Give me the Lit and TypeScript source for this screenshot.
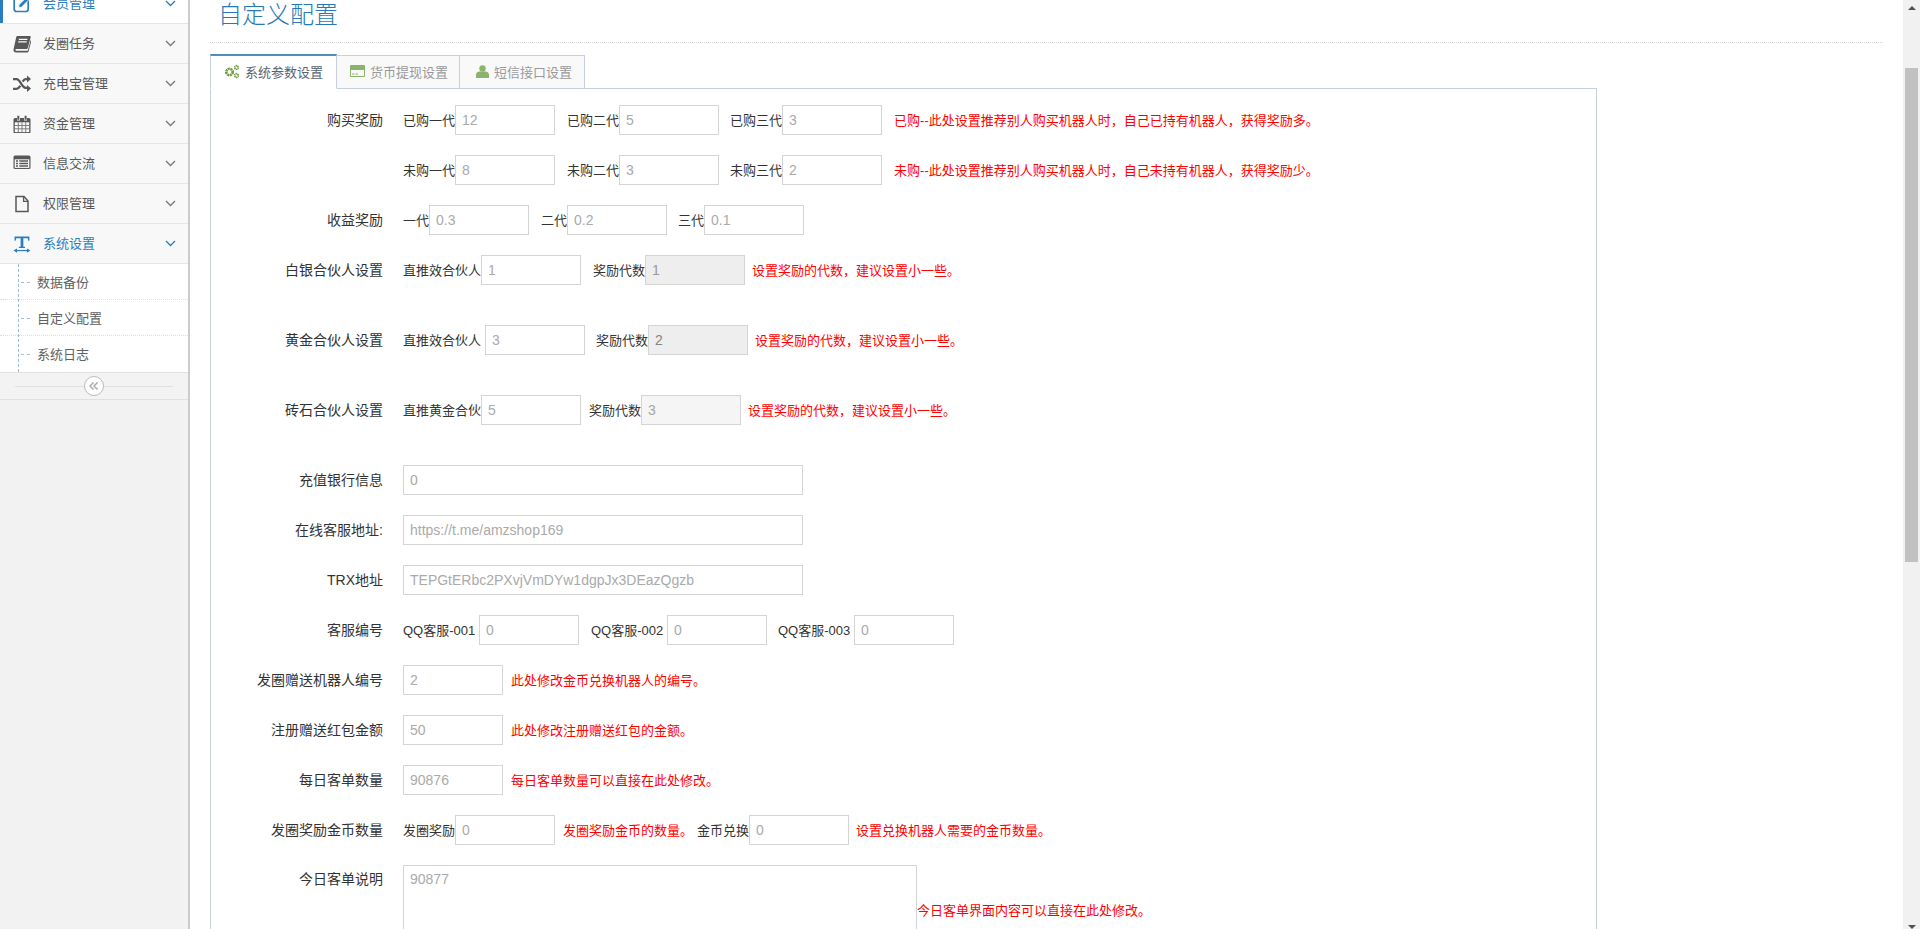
import { LitElement, html, css, svg } from "lit";
import { customElement } from "lit/decorators.js";

const ICONS: Record<string, unknown> = {
  edit: svg`<rect x="1.2" y="2" width="14" height="14.5" rx="2.6" fill="none" stroke="currentColor" stroke-width="1.7"/><path d="M5.5 12.6l.7-3L13.6 2.2l2.4 2.4-7.4 7.4z" fill="currentColor" stroke="#fff" stroke-width=".7"/>`,
  book: svg`<path d="M4.6 1h12.2c.8 0 1.1.6.9 1.3l-2.9 10.6c-.2.8-.8 1.1-1.5 1.1H3.4c-.5 0-1 .3-1 .9 0 .5.4.8 1 .8h11.3l3-10.6.8.5c-.1.3-3.1 11.2-3.1 11.2-.1.5-.6.8-1.1.8H3c-1.5 0-2.5-1.3-2.5-2.6 0-.5.1-1 .2-1.4L3.2 2.2C3.4 1.5 3.9 1 4.6 1z" fill="currentColor"/><path d="M5.8 4.4h8.6M5.2 6.8h8.6" stroke="#f8f8f8" stroke-width="1.2"/>`,
  random: svg`<path d="M0 4.2h3.6c3.8 0 5 8.6 9 8.6h1.6M0 13.8h3.6c1.6 0 2.6-1.2 3.6-3M9.6 6.6c.8-1.2 1.8-2.4 3-2.4h1.6" fill="none" stroke="currentColor" stroke-width="2.3"/><path d="M14 .4l4 3.6-4 3.6zM14 10l4 3.4-4 3.6z" fill="currentColor"/>`,
  calendar: svg`<path d="M2 3h2v2.6h3V3h4v2.6h3V3h2a1.5 1.5 0 011.5 1.5v12.4a1.5 1.5 0 01-1.5 1.5H2a1.5 1.5 0 01-1.5-1.5V4.500A1.500 1.500 0 012 3z" fill="currentColor"/><path d="M4.300 .8h2v4h-2zM11.600 .8h2v4h-2z" fill="currentColor"/><path d="M1.800 7.300h14.400v9.800H1.800z" fill="#f8f8f8"/><path d="M1.800 10.500h14.400M1.800 13.800h14.400M5.300 7.300v9.800M9 7.300v9.800M12.700 7.300v9.800" stroke="currentColor" stroke-width="1" opacity=".75"/>`,
  list: svg`<rect x=".5" y=".5" width="17" height="13.600" rx="1.500" fill="currentColor"/><path d="M1.700 4.300h14.600v8.600H1.700z" fill="#f8f8f8"/><path d="M3 6h2M3 8.500h2M3 11h2M6.300 6h8.700M6.300 8.500h8.700M6.300 11h8.700" stroke="currentColor" stroke-width="1.400"/>`,
  file: svg`<g transform="translate(2 .5)"><path d="M1 1h8l4 4.500V16H1z" fill="none" stroke="currentColor" stroke-width="1.500"/><path d="M8.600 1v4.900h4.400" fill="none" stroke="currentColor" stroke-width="1.300"/></g>`,
  width: svg`<g transform="translate(.5 .4) scale(1.06)"><path d="M1 1h14v4h-1l-.6-2.200H9.300v8h1.600v1.200H5.100v-1.200h1.600v-8H2.600L2 5H1z" fill="currentColor"/><path d="M3 14.300h10" stroke="currentColor" stroke-width="1.200"/><path d="M0 14.300l3.300-2v4zM16 14.300l-3.300-2v4z" fill="currentColor"/></g>`,
};

const NAV = [
  { t: "会员管理", i: "edit", cls: "first on" },
  { t: "发圈任务", i: "book", cls: "" },
  { t: "充电宝管理", i: "random", cls: "" },
  { t: "资金管理", i: "calendar", cls: "" },
  { t: "信息交流", i: "list", cls: "" },
  { t: "权限管理", i: "file", cls: "" },
  { t: "系统设置", i: "width", cls: "blue" },
];

type Item = { t?: string; v?: string; r?: string; c?: string };
type Row = { l: string; cls?: string; items: Item[] };

const HINT = "设置奖励的代数，建议设置小一些。";

const ROWS: Row[] = [
  { l: "购买奖励", items: [
    { t: "已购一代" }, { v: "12" },
    { t: "已购二代", c: "m12" }, { v: "5" },
    { t: "已购三代", c: "m11" }, { v: "3" },
    { r: "已购--此处设置推荐别人购买机器人时，自己已持有机器人，获得奖励多。", c: "m12" },
  ] },
  { l: "", items: [
    { t: "未购一代" }, { v: "8" },
    { t: "未购二代", c: "m12" }, { v: "3" },
    { t: "未购三代", c: "m11" }, { v: "2" },
    { r: "未购--此处设置推荐别人购买机器人时，自己未持有机器人，获得奖励少。", c: "m12" },
  ] },
  { l: "收益奖励", items: [
    { t: "一代" }, { v: "0.3" },
    { t: "二代", c: "m12" }, { v: "0.2" },
    { t: "三代", c: "m11" }, { v: "0.1" },
  ] },
  { l: "白银合伙人设置", cls: "tall", items: [
    { t: "直推效合伙人" }, { v: "1" },
    { t: "奖励代数", c: "m12" }, { v: "1", c: "dis" },
    { r: HINT, c: "m7" },
  ] },
  { l: "黄金合伙人设置", cls: "tall", items: [
    { t: "直推效合伙人" }, { v: "3", c: "m4" },
    { t: "奖励代数", c: "m11" }, { v: "2", c: "dis dark" },
    { r: HINT, c: "m7" },
  ] },
  { l: "砖石合伙人设置", cls: "tall", items: [
    { t: "直推黄金合伙" }, { v: "5" },
    { t: "奖励代数", c: "m8" }, { v: "3", c: "dis light" },
    { r: HINT, c: "m7" },
  ] },
  { l: "充值银行信息", items: [{ v: "0", c: "wide" }] },
  { l: "在线客服地址:", items: [{ v: "https://t.me/amzshop169", c: "wide" }] },
  { l: "TRX地址", items: [{ v: "TEPGtERbc2PXvjVmDYw1dgpJx3DEazQgzb", c: "wide" }] },
  { l: "客服编号", items: [
    { t: "QQ客服-001", c: "qq" }, { v: "0" },
    { t: "QQ客服-002", c: "m12 qq" }, { v: "0" },
    { t: "QQ客服-003", c: "m11 qq" }, { v: "0" },
  ] },
  { l: "发圈赠送机器人编号", items: [{ v: "2" }, { r: "此处修改金币兑换机器人的编号。", c: "m8" }] },
  { l: "注册赠送红包金额", items: [{ v: "50" }, { r: "此处修改注册赠送红包的金额。", c: "m8" }] },
  { l: "每日客单数量", items: [{ v: "90876" }, { r: "每日客单数量可以直接在此处修改。", c: "m8" }] },
  { l: "发圈奖励金币数量", items: [
    { t: "发圈奖励" }, { v: "0" },
    { r: "发圈奖励金币的数量。", c: "m8" },
    { t: "金币兑换", c: "m4" }, { v: "0" },
    { r: "设置兑换机器人需要的金币数量。", c: "m7" },
  ] },
];

@customElement("app-root")
export class AppRoot extends LitElement {
  static styles = css`
    :host {
      display: flex;
      height: 929px;
      overflow: hidden;
      background: #fff;
      font-family: "Liberation Sans", "Noto Sans CJK SC", sans-serif;
      font-size: 13px;
      color: #333;
    }
    .side {
      width: 190px;
      flex: none;
      box-sizing: border-box;
      background: #f2f2f2;
      border-right: 2px solid #ccc;
    }
    .nav {
      height: 40px;
      box-sizing: border-box;
      display: flex;
      align-items: center;
      background: #f8f8f8;
      border-bottom: 1px solid #e5e5e5;
      color: #585858;
      position: relative;
    }
    .nav.first { margin-top: -16px; }
    .nav.on { background: #fff; color: #2b7dbc; box-shadow: inset 3px 0 0 #2b7dbc; }
    .nav.blue { color: #2b7dbc; }
    .slot { width: 30px; margin-left: 7px; margin-right: 6px; display: flex; justify-content: center; }
    .slot svg { display: block; }
    .nav .name { flex: 1; padding-bottom: 3px; }
    .chev { margin-right: 12px; color: #777; }
    .on .chev, .blue .chev { color: #2b7dbc; }
    .subs { background: #fff; position: relative; }
    .subs::before {
      content: "";
      position: absolute;
      left: 18px;
      top: 0;
      bottom: 0;
      border-left: 1px dashed #9dbdd6;
    }
    .sub {
      height: 36px;
      box-sizing: border-box;
      padding: 0 0 1px 37px;
      display: flex;
      align-items: center;
      color: #616161;
      border-bottom: 1px dotted #ddd;
      position: relative;
    }
    .sub:last-child { border-bottom: none; padding-bottom: 2px; }
    .sub::before {
      content: "";
      position: absolute;
      left: 21px;
      top: 50%;
      width: 9px;
      border-top: 1px dashed #9dbdd6;
    }
    .collapse {
      height: 28px;
      box-sizing: border-box;
      background: #f3f3f3;
      border-top: 1px solid #e0e0e0;
      border-bottom: 1px solid #e0e0e0;
      position: relative;
      display: flex;
      align-items: center;
      justify-content: center;
    }
    .collapse::before {
      content: "";
      position: absolute;
      left: 15px;
      right: 15px;
      top: 13px;
      border-top: 1px solid #e0e0e0;
    }
    .circle {
      width: 20px;
      height: 20px;
      box-sizing: border-box;
      border: 1px solid #bbb;
      border-radius: 50%;
      background: #fff;
      color: #aaa;
      display: flex;
      align-items: center;
      justify-content: center;
      position: relative;
    }
    .main {
      flex: 1;
      min-width: 0;
      padding: 0 20px;
    }
    .head {
      height: 43px;
      box-sizing: border-box;
      border-bottom: 1px dotted #d5d5d5;
      padding-left: 8px;
      font-size: 24px;
      line-height: 26px;
      color: #2679b5;
      font-family: "Noto Sans CJK SC", sans-serif;
      font-weight: 300;
    }
    .tabbox { width: 1387px; margin-top: 11px; }
    .tabs { display: flex; height: 35px; align-items: flex-end; position: relative; z-index: 1; margin-bottom: -1px; }
    .tab {
      height: 34px;
      box-sizing: border-box;
      display: flex;
      align-items: center;
      background: #f9f9f9;
      border: 1px solid #c5d0dc;
      border-left: none;
      color: #999;
      padding-bottom: 2px;
    }
    .tab svg { display: block; margin-right: 5px; }
    .tab.act {
      height: 35px;
      border-top: 2px solid #4c8fbd;
      border-left: 1px solid #c5d0dc;
      border-bottom-color: #fff;
      background: #fff;
      color: #576373;
      padding: 0 13px 1px 13px;
      width: 127px;
    }
    .tab.t2 { width: 123px; padding-left: 13px; }
    .tab.t3 { width: 125px; padding-left: 16px; }
    .pane {
      border: 1px solid #c5d0dc;
      padding: 16px 0 20px;
      box-sizing: border-box;
    }
    .row { display: flex; align-items: center; margin-bottom: 20px; height: 30px; }
    .row.tall { margin-bottom: 40px; }
    .row.area { align-items: flex-start; height: 90px; }
    .label {
      width: 172px;
      flex: none;
      text-align: right;
      margin-right: 20px;
      color: #333;
      font-size: 14px;
      padding-bottom: 2px;
    }
    .row.area .label { line-height: 28px; }
    .txt { white-space: nowrap; flex: none; padding-bottom: 2px; }
    .red { white-space: nowrap; flex: none; color: #f00; padding-bottom: 2px; }
    input, textarea {
      width: 100px;
      height: 30px;
      box-sizing: border-box;
      flex: none;
      border: 1px solid #d5d5d5;
      border-radius: 0;
      padding: 5px 4px 5px 6px;
      margin: 0;
      background: #fff;
      font-family: "Liberation Sans", sans-serif;
      font-size: 14px;
      outline: none;
    }
    input::placeholder, textarea::placeholder { color: #aaa; opacity: 1; }
    input.wide { width: 400px; }
    input.dis { background: #eee; }
    input.dis::placeholder { color: #999; }
    input.dark::placeholder { color: #848484; }
    input.light { background: #f5f5f5; }
    input.light::placeholder { color: #a5a5a5; }
    textarea { width: 514px; height: 90px; resize: none; display: block; }
    .areawrap { display: flex; align-items: center; }
    .m3 { margin-left: 3px; }
    .m4 { margin-left: 4px; }
    .m7 { margin-left: 7px; }
    .m8 { margin-left: 8px; }
    .m11 { margin-left: 11px; }
    .m12 { margin-left: 12px; }
    .qq { width: 76px; }
    .bar {
      width: 17px;
      flex: none;
      background: #f1f1f1;
      display: flex;
      flex-direction: column;
      align-items: center;
      padding-top: 6px;
      box-sizing: border-box;
    }
    .up { width: 0; height: 0; border: 4px solid transparent; border-top: 0; border-bottom: 4px solid #505050; }
    .thumb { width: 13px; height: 494px; background: #c1c1c1; margin-top: 58px; }
    .down { width: 0; height: 0; border: 4px solid transparent; border-bottom: 0; border-top: 4px solid #505050; margin-top: auto; margin-bottom: 0; }
  `;

  private icon(name: string, w: number, h: number, vb: string) {
    return html`<svg width=${w} height=${h} viewBox=${vb}>${ICONS[name]}</svg>`;
  }

  private item(it: Item) {
    if (it.v !== undefined) {
      return html`<input class=${it.c ?? ""} placeholder=${it.v} />`;
    }
    if (it.r) return html`<span class="red ${it.c ?? ""}">${it.r}</span>`;
    return html`<span class="txt ${it.c ?? ""}">${it.t}</span>`;
  }

  render() {
    return html`
      <aside class="side">
        ${NAV.map(
          (n) => html`<div class="nav ${n.cls}">
            <span class="slot">${this.icon(n.i, 18, 18, "0 0 18 18")}</span>
            <span class="name">${n.t}</span>
            <svg class="chev" width="11" height="7" viewBox="0 0 11 7"><path d="M1 1l4.500 4.500L10 1" fill="none" stroke="currentColor" stroke-width="1.300"/></svg>
          </div>`
        )}
        <div class="subs">
          <div class="sub">数据备份</div>
          <div class="sub">自定义配置</div>
          <div class="sub">系统日志</div>
        </div>
        <div class="collapse">
          <span class="circle"><svg width="10" height="8" viewBox="0 0 10 8"><path d="M4.500 .5L1 4l3.500 3.500M8.500 .5L5 4l3.500 3.500" fill="none" stroke="currentColor" stroke-width="1.500"/></svg></span>
        </div>
      </aside>
      <main class="main">
        <div class="head">自定义配置</div>
        <div class="tabbox">
          <div class="tabs">
            <div class="tab act">
              <svg width="16" height="15" viewBox="0 0 16 15"><g fill="none" stroke="#6a9a3c"><circle cx="5.500" cy="8" r="3.200" stroke-width="2.600" stroke-dasharray="2 .6"/><circle cx="12.500" cy="3.500" r="1.800" stroke-width="1.800" stroke-dasharray="1.200 .5"/><circle cx="12.500" cy="11.500" r="1.800" stroke-width="1.800" stroke-dasharray="1.200 .5"/></g></svg>
              系统参数设置
            </div>
            <div class="tab t2">
              <svg width="15" height="12" viewBox="0 0 15 12"><rect width="15" height="12" rx="1" fill="#8ab46d"/><rect x="1" y="5" width="13" height="6" fill="#f9f9f9"/><path d="M2 9h2.500M5.500 9H8" stroke="#8ab46d"/></svg>
              货币提现设置
            </div>
            <div class="tab t3">
              <svg width="13" height="13" viewBox="0 0 13 13"><circle cx="6.500" cy="3.500" r="3.200" fill="#8ab46d"/><path d="M0 13V10c0-2.200 1.500-3.500 3.500-3.500h6c2 0 3.500 1.300 3.500 3.500v3z" fill="#8ab46d"/></svg>
              短信接口设置
            </div>
          </div>
          <div class="pane">
            ${ROWS.map(
              (r) => html`<div class="row ${r.cls ?? ""}">
                <span class="label">${r.l}</span>
                ${r.items.map((i) => this.item(i))}
              </div>`
            )}
            <div class="row area">
              <span class="label">今日客单说明</span>
              <div class="areawrap">
                <textarea placeholder="90877"></textarea>
                <span class="red">今日客单界面内容可以直接在此处修改。</span>
              </div>
            </div>
          </div>
        </div>
      </main>
      <div class="bar">
        <span class="up"></span>
        <span class="thumb"></span>
        <span class="down"></span>
      </div>
    `;
  }
}
